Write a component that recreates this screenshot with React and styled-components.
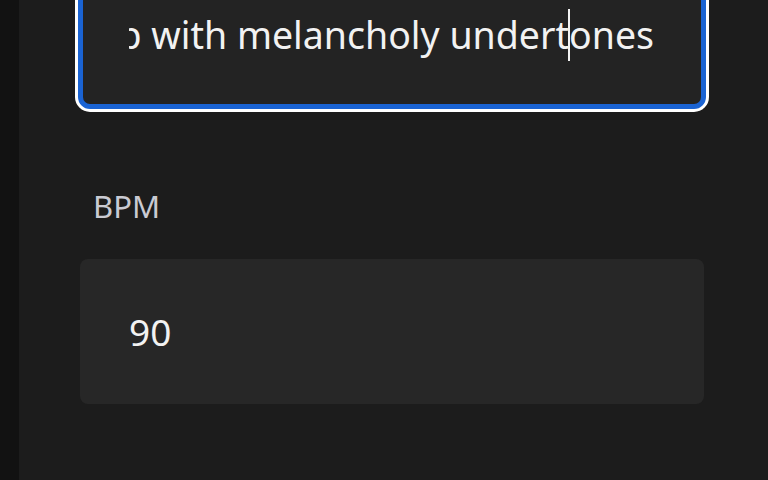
import React from "react";
import styled, { createGlobalStyle } from "styled-components";

const Global = createGlobalStyle`
  html, body { margin: 0; padding: 0; background: #1c1c1c; overflow: hidden; }
  body { font-family: "Noto Sans", "Open Sans", sans-serif; }
`;

const Screen = styled.div`
  display: flex;
  width: 768px;
  height: 480px;
  overflow: hidden;
  background: #1c1c1c;
`;

const SideStrip = styled.div`
  width: 19px;
  flex: none;
  background: #121212;
`;

const Main = styled.div`
  flex: 1;
  min-width: 0;
  display: flex;
  flex-direction: column;
  padding: 0 59px 0 56px;
`;

const TextInput = styled.div`
  margin: -59px 3px 0;
  height: 168px;
  min-width: 0;
  box-sizing: border-box;
  border: 5px solid #1a63d3;
  border-radius: 12px;
  box-shadow: 0 0 0 3px #ffffff;
  background: #232323;
  padding: 63px 47px 0 46px;
`;

const Viewport = styled.div`
  display: flex;
  justify-content: flex-end;
  overflow: hidden;
`;

const InputText = styled.div`
  flex: none;
  white-space: nowrap;
  font-size: 37.5px;
  line-height: 52px;
  color: #f2f2f2;
`;

const CaretAnchor = styled.span`
  position: relative;
  display: inline-block;
  width: 0;
  height: 0;
`;

const Caret = styled.span`
  position: absolute;
  left: -1px;
  bottom: -12px;
  width: 2px;
  height: 57px;
  background: #f2f2f2;
`;

const Label = styled.div`
  margin: 76px 0 0 18px;
  font-size: 31px;
  line-height: 42px;
  color: #c9cad2;
`;

const Field = styled.div`
  margin: 32px 5px 0;
  height: 145px;
  border-radius: 8px;
  background: #272727;
  display: flex;
  align-items: center;
  padding-left: 49px;
  font-size: 37px;
  color: #f2f2f2;
`;

export default function App() {
  return (
    <>
      <Global />
      <Screen>
        <SideStrip />
        <Main>
          <TextInput>
            <Viewport>
              <InputText>
                Lo-fi hip hop with melancholy undert
                <CaretAnchor>
                  <Caret />
                </CaretAnchor>
                ones
              </InputText>
            </Viewport>
          </TextInput>
          <Label>BPM</Label>
          <Field>90</Field>
        </Main>
      </Screen>
    </>
  );
}
